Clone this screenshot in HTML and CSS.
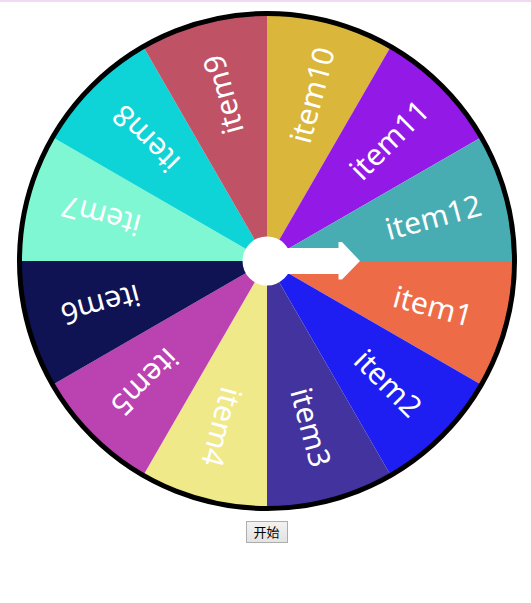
FILE: index.html
```html
<!DOCTYPE html>
<html lang="zh">
<head>
<meta charset="utf-8">
<title>转盘</title>
<link rel="stylesheet" href="styles.css">
</head>
<body>
<main class="page">
  <div class="wheel-box">
    <svg class="wheel" width="500" height="500" viewBox="0 0 500 500">
      <!-- twelve 30° sectors, clockwise from 3 o'clock -->
      <path class="sector s1" d="M250 250 L497 250 A247 247 0 0 1 463.91 373.5 Z"/>
      <path class="sector s2" d="M250 250 L463.91 373.5 A247 247 0 0 1 373.5 463.91 Z"/>
      <path class="sector s3" d="M250 250 L373.5 463.91 A247 247 0 0 1 250 497 Z"/>
      <path class="sector s4" d="M250 250 L250 497 A247 247 0 0 1 126.5 463.91 Z"/>
      <path class="sector s5" d="M250 250 L126.5 463.91 A247 247 0 0 1 36.09 373.5 Z"/>
      <path class="sector s6" d="M250 250 L36.09 373.5 A247 247 0 0 1 3 250 Z"/>
      <path class="sector s7" d="M250 250 L3 250 A247 247 0 0 1 36.09 126.5 Z"/>
      <path class="sector s8" d="M250 250 L36.09 126.5 A247 247 0 0 1 126.5 36.09 Z"/>
      <path class="sector s9" d="M250 250 L126.5 36.09 A247 247 0 0 1 250 3 Z"/>
      <path class="sector s10" d="M250 250 L250 3 A247 247 0 0 1 373.5 36.09 Z"/>
      <path class="sector s11" d="M250 250 L373.5 36.09 A247 247 0 0 1 463.91 126.5 Z"/>
      <path class="sector s12" d="M250 250 L463.91 126.5 A247 247 0 0 1 497 250 Z"/>

      <circle class="rim" cx="250" cy="250" r="247.5"/>

      <g class="labels">
        <text transform="translate(250 250) rotate(15)" x="172" y="0">item1</text>
        <text transform="translate(250 250) rotate(45)" x="172" y="0">item2</text>
        <text transform="translate(250 250) rotate(75)" x="172" y="0">item3</text>
        <text transform="translate(250 250) rotate(105)" x="172" y="0">item4</text>
        <text transform="translate(250 250) rotate(135)" x="172" y="0">item5</text>
        <text transform="translate(250 250) rotate(165)" x="172" y="0">item6</text>
        <text transform="translate(250 250) rotate(195)" x="172" y="0">item7</text>
        <text transform="translate(250 250) rotate(225)" x="172" y="0">item8</text>
        <text transform="translate(250 250) rotate(255)" x="172" y="0">item9</text>
        <text transform="translate(250 250) rotate(285)" x="172" y="0">item10</text>
        <text transform="translate(250 250) rotate(315)" x="172" y="0">item11</text>
        <text transform="translate(250 250) rotate(345)" x="172" y="0">item12</text>
      </g>

      <!-- pointer: hub and arrow -->
      <g class="pointer">
        <polygon points="262,237 321.5,237 321.5,231 325,231 343,250 325,268.5 321.5,268.5 321.5,263 262,263"/>
        <circle cx="250" cy="250" r="24.5"/>
      </g>
    </svg>
  </div>
  <button class="start" type="button">开始</button>
</main>
</body>
</html>
```

FILE: styles.css
```css
html, body {
  margin: 0;
  padding: 0;
  background: #ffffff;
}

body {
  border-top: 2px solid #f3d8f3;
  font-family: "Noto Sans", "Noto Sans CJK SC", sans-serif;
}

.page {
  display: flex;
  flex-direction: column;
  align-items: center;
  padding: 9px 0 0 2px;
  gap: 10px;
}

.wheel-box {
  width: 500px;
  height: 500px;
}

.wheel {
  display: block;
}

.sector { stroke: none; }
.s1  { fill: #ee6b47; }
.s2  { fill: #1e1ef2; }
.s3  { fill: #43339f; }
.s4  { fill: #f0e989; }
.s5  { fill: #bb42b1; }
.s6  { fill: #0f1253; }
.s7  { fill: #7ff7d3; }
.s8  { fill: #0ed4d8; }
.s9  { fill: #c05266; }
.s10 { fill: #dab63a; }
.s11 { fill: #9319e6; }
.s12 { fill: #48adb3; }

.rim {
  fill: none;
  stroke: #000000;
  stroke-width: 5;
}

.labels text {
  fill: #ffffff;
  font-family: "Noto Sans", "Open Sans", sans-serif;
  font-size: 30px;
  text-anchor: middle;
  dominant-baseline: central;
}

.pointer {
  fill: #ffffff;
}

.start {
  width: 42px;
  height: 22px;
  padding: 0;
  border: 1px solid #adadad;
  border-radius: 0;
  background: linear-gradient(#f2f2f2, #e3e3e3);
  color: #000000;
  font-family: "Noto Sans CJK SC", sans-serif;
  font-size: 13px;
  line-height: 20px;
}
```
